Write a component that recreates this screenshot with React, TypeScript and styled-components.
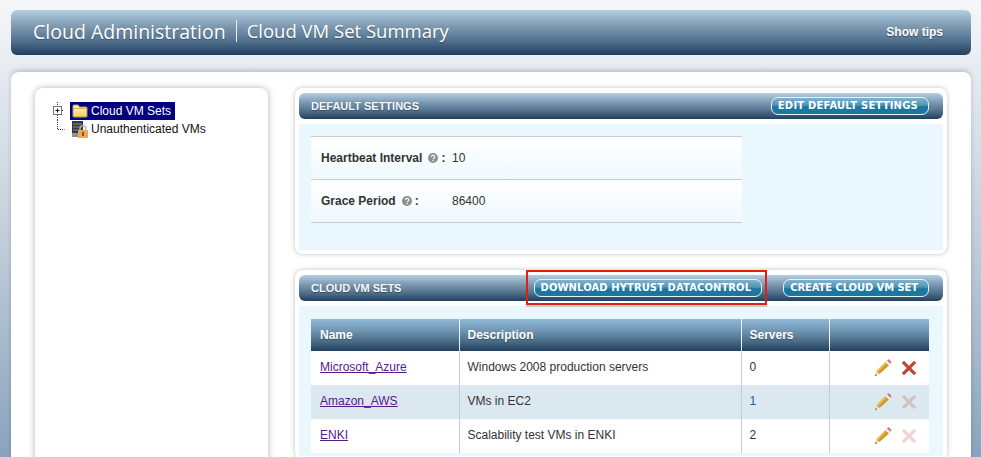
import React from 'react';
import styled, { createGlobalStyle } from 'styled-components';

const GlobalStyle = createGlobalStyle`
  html, body {
    margin: 0;
    padding: 0;
    height: 457px;
    overflow: hidden;
    font-family: "Liberation Sans", Arial, sans-serif;
    color: #333;
  }
`;

const barGradient = 'linear-gradient(to bottom, #b4cfe3 0%, #7f9bb2 35%, #4f6f8c 70%, #1f3f5c 100%)';

const Page = styled.div`
  height: 457px;
  box-sizing: border-box;
  padding: 10px 10px 0 11px;
  overflow: hidden;
  background: linear-gradient(to bottom, #f6f7fa 0%, #e6eaf0 16%, #c5d0dc 50%, #8aa3bd 100%);
`;

const TopBar = styled.header`
  height: 45px;
  box-sizing: border-box;
  display: flex;
  align-items: center;
  padding: 0 28px 3px 22px;
  border-radius: 6px;
  background: ${barGradient};
  color: #fff;
`;

const Title = styled.h1`
  margin: 0;
  font: 400 19.5px "Open Sans", sans-serif;
  text-shadow: 0 1px 1px rgba(0, 0, 0, 0.3);
  white-space: nowrap;
`;

const SubTitle = styled(Title)`
  margin-left: 10px;
  padding-left: 10px;
  font-size: 18.5px;
  border-left: 1px solid #e8eff5;
  line-height: 22px;
`;

const Tips = styled.a`
  margin: 1px 0 0 auto;
  font-size: 12px;
  font-weight: 700;
  text-shadow: 0 1px 1px rgba(0, 0, 0, 0.4);
`;

const Sheet = styled.main`
  margin-top: 17px;
  height: 500px;
  box-sizing: border-box;
  padding: 16px 24px 0;
  display: flex;
  gap: 27px;
  align-items: flex-start;
  background: #fff;
  border-radius: 8px;
  box-shadow: 0 -2px 5px rgba(0, 0, 0, 0.18);
`;

const TreePanel = styled.nav`
  width: 233px;
  height: 480px;
  flex: none;
  box-sizing: border-box;
  padding: 14px 0 0 16px;
  background: #fff;
  border-radius: 8px;
  box-shadow: 0 0 7px rgba(0, 0, 0, 0.3);
`;

const TreeRow = styled.div`
  height: 18px;
  display: flex;
  align-items: center;
  font-size: 12px;
  color: #111;
`;

const TreeLabel = styled.span<{ $selected?: boolean }>`
  display: flex;
  align-items: center;
  gap: 3px;
  height: 18px;
  padding: 0 4px 0 2px;
  margin-left: 3px;
  background: ${(p) => (p.$selected ? '#000080' : 'transparent')};
  color: ${(p) => (p.$selected ? '#fff' : '#111')};
`;

const Column = styled.div`
  width: 652px;
  flex: none;
  display: flex;
  flex-direction: column;
  gap: 16px;
`;

const Panel = styled.section`
  position: relative;
  padding: 5px 4px 4px;
  background: #fff;
  border-radius: 8px;
  box-shadow: 0 0 5px rgba(0, 0, 0, 0.25);
`;

const PanelHead = styled.div`
  height: 26px;
  display: flex;
  align-items: center;
  gap: 21px;
  padding: 0 14px 0 12px;
  border-radius: 6px;
  background: ${barGradient};
`;

const PanelTitle = styled.h2`
  margin: 0 auto 0 0;
  font-size: 11px;
  font-weight: 700;
  color: #f6f9fb;
  text-shadow: 0 1px 1px rgba(0, 0, 0, 0.35);
`;

const HeadButton = styled.button<{ $tracking: number }>`
  height: 18px;
  box-sizing: border-box;
  padding: 0 10px 1px 6px;
  border: 1px solid #e4f2f8;
  border-radius: 7px;
  background: linear-gradient(to bottom, #7fb4cf 0%, #4f93b5 45%, #1b779f 55%, #1b779f 100%);
  color: #fff;
  font: 700 10px "DejaVu Sans", sans-serif;
  letter-spacing: ${(p) => p.$tracking}px;
  white-space: nowrap;
`;

const PanelBody = styled.div<{ $height?: number }>`
  margin-top: 5px;
  padding: ${(p) => (p.$height ? '12px 12px 0' : '13px 12px 3px')};
  height: ${(p) => (p.$height ? `${p.$height}px` : 'auto')};
  background: #eaf8fe;
`;

const SettingList = styled.div`
  width: 431px;
  border-top: 1px solid #c8ccd0;
`;

const SettingRow = styled.div`
  height: 42px;
  display: flex;
  align-items: center;
  padding-left: 10px;
  font-size: 12px;
  background: linear-gradient(to bottom, #fff 0%, #eff9fe 100%);
  border-bottom: 1px solid #c8ccd0;
`;

const SettingName = styled.span<{ $width: number }>`
  width: ${(p) => p.$width}px;
  display: flex;
  align-items: center;
  font-weight: 700;
  color: #333;
`;

const HelpMark = styled.svg`
  margin: 0 3px 0 6px;
`;

const Grid = styled.table`
  width: 618px;
  border-collapse: collapse;
  table-layout: fixed;
  font-size: 12px;
`;

const HeadCell = styled.th<{ $width?: number }>`
  box-sizing: border-box;
  width: ${(p) => (p.$width ? `${p.$width}px` : 'auto')};
  height: 32px;
  padding: 0 0 0 8px;
  text-align: left;
  font-size: 12px;
  color: #fff;
  text-shadow: 0 1px 1px rgba(0, 0, 0, 0.3);
  background: linear-gradient(to bottom, #8fb9d8 0%, #6d92ae 40%, #44657f 75%, #1f4060 100%);
  border-left: 1px solid #eef5f9;
  &:first-child { border-left: 0; padding-left: 9px; }
`;

const Row = styled.tr<{ $alt?: boolean }>`
  height: 34px;
  background: ${(p) => (p.$alt ? '#dbe8ef' : '#fff')};
`;

const Cell = styled.td`
  padding: 0 0 2px 8px;
  color: #333;
  border-left: 1px solid #c8ccd0;
  &:first-child { border-left: 0; padding-left: 9px; }
`;

const ActionCell = styled(Cell)`
  padding: 0 12px 0 0;
`;

const Actions = styled.div`
  display: flex;
  justify-content: flex-end;
  align-items: center;
  gap: 9px;
`;

const NameLink = styled.a`
  color: #551a8b;
  text-decoration: underline;
`;

const CountLink = styled.span<{ $link?: boolean }>`
  color: ${(p) => (p.$link ? '#1a5a96' : '#333')};
`;

const Callout = styled.div`
  position: absolute;
  left: 231px;
  top: 0;
  width: 241px;
  height: 35px;
  box-sizing: border-box;
  border: 2px solid #e0200c;
  box-shadow: 0 2px 0 rgba(120, 130, 140, 0.35);
  pointer-events: none;
`;

const Expander = () => (
  <svg width="16" height="18" viewBox="0 0 16 18">
    <path d="M6.5 0v4M6.5 13v5M11 8.5h2" stroke="#333" strokeDasharray="1 1" fill="none" />
    <rect x="2.5" y="4.5" width="8" height="8" fill="#fff" stroke="#777" />
    <path d="M4.5 8.5h4M6.5 6.5v4" stroke="#111" fill="none" />
  </svg>
);

const Elbow = () => (
  <svg width="16" height="18" viewBox="0 0 16 18">
    <path d="M6.5 0v9.5h7" stroke="#333" strokeDasharray="1 1" fill="none" />
  </svg>
);

const FolderIcon = () => (
  <svg width="16" height="14" viewBox="0 0 16 14">
    <defs>
      <linearGradient id="folderFill" x1="0" y1="0" x2="0" y2="1">
        <stop offset="0" stopColor="#fff7c4" />
        <stop offset="1" stopColor="#f2cf62" />
      </linearGradient>
    </defs>
    <path d="M1 3V2q0-1 1-1h4l1.500 2H14q1 0 1 1v8q0 1-1 1H2q-1 0-1-1z" fill="url(#folderFill)" stroke="#b99a45" />
    <path d="M1.500 4.500h13" stroke="#d9b650" fill="none" />
  </svg>
);

const LockedServerIcon = () => (
  <svg width="16" height="17" viewBox="0 0 16 17">
    <rect x="0" y="0" width="11" height="16" fill="#33363a" />
    <path d="M1 3h9M1 6h9M1 9h7" stroke="#8d9196" fill="none" />
    <rect x="0" y="12" width="6" height="4" fill="#8d9196" />
    <path d="M8 9V7.500a2.900 2.900 0 0 1 5.800 0V9" stroke="#b4b4b4" strokeWidth="1.400" fill="none" />
    <rect x="6" y="9" width="10" height="8" rx="1" fill="#e8a850" />
    <rect x="10.200" y="11" width="1.600" height="4" fill="#6a4310" />
  </svg>
);

const HelpIcon = () => (
  <HelpMark width="10" height="10" viewBox="0 0 10 10">
    <circle cx="5" cy="5" r="5" fill="#8f8f8f" />
    <path d="M3.400 3.900a1.700 1.500 0 1 1 2.500 1.300q-.9.4-.9 1.100" stroke="#fff" strokeWidth="1.100" fill="none" />
    <rect x="4.400" y="7" width="1.200" height="1.200" fill="#fff" />
  </HelpMark>
);

const PencilIcon = () => (
  <svg width="18" height="18" viewBox="0 0 18 18">
    <path d="M1 17l1.500-5L5.500 15z" fill="#e9d9b8" />
    <path d="M1 17l.6-2 1.400 1.400z" fill="#555" />
    <path d="M2.500 12L11.500 3l3.500 3.500L5.500 15z" fill="#d09a28" />
    <path d="M2.500 12L11.500 3l1.200 1.200L4 13.200z" fill="#e8bf55" />
    <path d="M11.500 3l1.500-1.500 3.500 3.500L15 6.500z" fill="#f2f0ea" />
    <path d="M13 1.500l1-1q.6-.4 1.200 0l2 2q.5.6 0 1.200l-1 1z" fill="#d9707c" />
  </svg>
);

const CrossIcon = ({ opacity = 1 }: { opacity?: number }) => (
  <svg width="16" height="16" viewBox="0 0 16 16" opacity={opacity}>
    <path d="M3 1l5 5 5-5 2 2-5 5 5 5-2 2-5-5-5 5-2-2 5-5-5-5z" fill="#c0392f" stroke="#b5483c" strokeWidth="0.5" />
  </svg>
);

const vmSets = [
  { name: 'Microsoft_Azure', description: 'Windows 2008 production servers', servers: 0, crossOpacity: 0.95 },
  { name: 'Amazon_AWS', description: 'VMs in EC2', servers: 1, crossOpacity: 0.22, alt: true, link: true },
  { name: 'ENKI', description: 'Scalability test VMs in ENKI', servers: 2, crossOpacity: 0.22 },
];

export default function App() {
  return (
    <Page>
      <GlobalStyle />
      <TopBar>
        <Title>Cloud Administration</Title>
        <SubTitle>Cloud VM Set Summary</SubTitle>
        <Tips>Show tips</Tips>
      </TopBar>
      <Sheet>
        <TreePanel>
          <TreeRow>
            <Expander />
            <TreeLabel $selected>
              <FolderIcon />
              Cloud VM Sets
            </TreeLabel>
          </TreeRow>
          <TreeRow>
            <Elbow />
            <TreeLabel>
              <LockedServerIcon />
              Unauthenticated VMs
            </TreeLabel>
          </TreeRow>
        </TreePanel>
        <Column>
          <Panel>
            <PanelHead>
              <PanelTitle>DEFAULT SETTINGS</PanelTitle>
              <HeadButton $tracking={0.2}>EDIT DEFAULT SETTINGS</HeadButton>
            </PanelHead>
            <PanelBody $height={114}>
              <SettingList>
                <SettingRow>
                  <SettingName $width={131}>
                    Heartbeat Interval <HelpIcon />:
                  </SettingName>
                  10
                </SettingRow>
                <SettingRow>
                  <SettingName $width={131}>
                    Grace Period <HelpIcon />:
                  </SettingName>
                  86400
                </SettingRow>
              </SettingList>
            </PanelBody>
          </Panel>
          <Panel>
            <PanelHead>
              <PanelTitle>CLOUD VM SETS</PanelTitle>
              <HeadButton $tracking={0.08}>DOWNLOAD HYTRUST DATACONTROL</HeadButton>
              <HeadButton $tracking={-0.1}>CREATE CLOUD VM SET</HeadButton>
            </PanelHead>
            <Callout />
            <PanelBody>
              <Grid>
                <thead>
                  <tr>
                    <HeadCell $width={148}>Name</HeadCell>
                    <HeadCell $width={282}>Description</HeadCell>
                    <HeadCell $width={88}>Servers</HeadCell>
                    <HeadCell />
                  </tr>
                </thead>
                <tbody>
                  {vmSets.map((set) => (
                    <Row key={set.name} $alt={set.alt}>
                      <Cell>
                        <NameLink>{set.name}</NameLink>
                      </Cell>
                      <Cell>{set.description}</Cell>
                      <Cell>
                        <CountLink $link={set.link}>{set.servers}</CountLink>
                      </Cell>
                      <ActionCell>
                        <Actions>
                          <PencilIcon />
                          <CrossIcon opacity={set.crossOpacity} />
                        </Actions>
                      </ActionCell>
                    </Row>
                  ))}
                </tbody>
              </Grid>
            </PanelBody>
          </Panel>
        </Column>
      </Sheet>
    </Page>
  );
}
